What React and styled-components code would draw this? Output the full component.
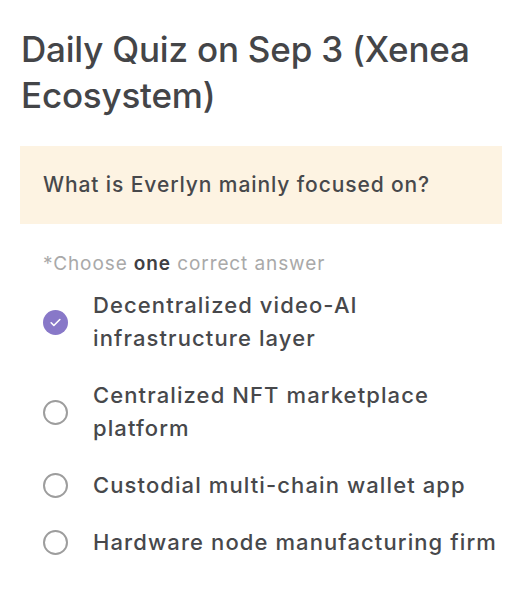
import React from 'react'
import styled, { createGlobalStyle } from 'styled-components'

const GlobalStyle = createGlobalStyle`
  body {
    margin: 0;
    background: #ffffff;
    font-family: Inter, "Noto Sans", sans-serif;
  }
`

const Page = styled.div`
  padding: 26px 23px 0 20px;
`

const Title = styled.h1`
  margin: 0 0 0 1px;
  font-size: 35px;
  line-height: 46px;
  font-weight: 500;
  color: #444548;
  letter-spacing: -0.2px;
`

const QuestionBox = styled.div`
  margin-top: 28px;
  background: #fdf3e2;
  padding: 26px 23px;
  font-size: 21px;
  line-height: 26px;
  font-weight: 500;
  color: #47484b;
  letter-spacing: 0.9px;
`

const Hint = styled.p`
  margin: 28px 0 0 23px;
  font-size: 19px;
  line-height: 24px;
  color: #a9a9a9;
  letter-spacing: 0.9px;

  b {
    color: #3f4043;
    font-weight: 600;
  }
`

const Options = styled.ul`
  list-style: none;
  margin: 13px 0 0 0;
  padding: 0;
  display: flex;
  flex-direction: column;
  gap: 24px;
`

const Option = styled.li`
  display: flex;
  align-items: center;
  gap: 25px;
  padding-left: 23px;
`

const Radio = styled.span`
  flex: none;
  width: 25px;
  height: 25px;
  box-sizing: border-box;
  border-radius: 50%;
  border: ${p => (p.$checked ? 'none' : '2px solid #9d9d9d')};
  background: ${p => (p.$checked ? '#8878c8' : 'transparent')};
  display: flex;
  align-items: center;
  justify-content: center;
`

const Label = styled.span`
  font-size: 22px;
  line-height: 33px;
  font-weight: 500;
  color: #47484b;
  letter-spacing: 1.1px;
`

const options = [
  'Decentralized video-AI infrastructure layer',
  'Centralized NFT marketplace platform',
  'Custodial multi-chain wallet app',
  'Hardware node manufacturing firm',
]

export default function App() {
  return (
    <>
      <GlobalStyle />
      <Page>
        <Title>Daily Quiz on Sep 3 (Xenea Ecosystem)</Title>
        <QuestionBox>What is Everlyn mainly focused on?</QuestionBox>
        <Hint>*Choose <b>one</b> correct answer</Hint>
        <Options>
          {options.map((text, i) => (
            <Option key={text}>
              <Radio $checked={i === 0}>
                {i === 0 && (
                  <svg width="13" height="13" viewBox="0 0 24 24" fill="none" stroke="#fff" strokeWidth="3" strokeLinecap="round" strokeLinejoin="round">
                    <path d="M4 12.5l5 5L20 6.5" />
                  </svg>
                )}
              </Radio>
              <Label>{text}</Label>
            </Option>
          ))}
        </Options>
      </Page>
    </>
  )
}
